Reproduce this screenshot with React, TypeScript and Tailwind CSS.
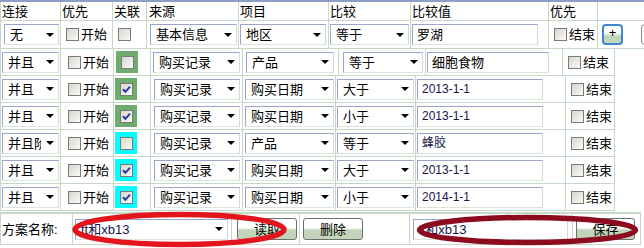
import React from "react";

const line = "border-[#c6d8c6]";

function Box({ checked }: { checked?: boolean }) {
  return (
    <span className="flex h-[13px] w-[13px] shrink-0 items-center justify-center border border-[#7a7a7a] bg-linear-to-br from-[#d6d6cc] to-[#fbfbf8]">
      {checked && (
        <svg width="11" height="11" viewBox="0 0 11 11">
          <path d="M2 5.2 L4.4 7.8 L9 2.6" fill="none" stroke="#2b3a9e" strokeWidth="2" />
        </svg>
      )}
    </span>
  );
}

function Sel({ text, className }: { text: string; className: string }) {
  return (
    <div className={`flex h-[21px] items-center border border-t-[#9aa4cc] border-l-[#9aa4cc] border-r-[#cfdccf] border-b-[#dbe6db] bg-white ${className}`}>
      <span className="min-w-0 flex-1 overflow-hidden whitespace-nowrap pl-[5px]">{text}</span>
      <span className="flex h-full w-[17px] shrink-0 items-center justify-center bg-white">
        <span className="h-0 w-0 border-x-[4px] border-t-[4px] border-x-transparent border-t-black" />
      </span>
    </div>
  );
}

function Field({ text, className }: { text: string; className: string }) {
  return (
    <div className={`flex h-[21px] items-center overflow-hidden whitespace-nowrap border border-t-[#9aa4cc] border-l-[#9aa4cc] border-r-[#cfdccf] border-b-[#dbe6db] bg-white pl-[4px] ${className}`}>
      {text}
    </div>
  );
}

function Btn({ text, className }: { text: string; className: string }) {
  return (
    <div className={`flex h-[22px] items-center justify-center rounded-[3px] border border-[#6e6e6e] bg-linear-to-b from-white from-45% to-[#c2d5ba] to-55% ${className}`}>
      {text}
    </div>
  );
}

function Check({ label }: { label: string }) {
  return (
    <div className="flex items-center gap-[2px]">
      <Box />
      <span>{label}</span>
    </div>
  );
}

const rows = [
  { link: "并且", color: "bg-[#6dac6d]", checked: true, item: "购买日期", cmp: "大于", val: "2013-1-1" },
  { link: "并且", color: "bg-[#6dac6d]", checked: true, item: "购买日期", cmp: "小于", val: "2013-1-1" },
  { link: "并且阶段", color: "bg-[#00ffff]", checked: false, item: "产品", cmp: "等于", val: "蜂胶" },
  { link: "并且", color: "bg-[#00ffff]", checked: true, item: "购买日期", cmp: "大于", val: "2013-1-1" },
  { link: "并且", color: "bg-[#00ffff]", checked: true, item: "购买日期", cmp: "小于", val: "2014-1-1" },
];

export default function App() {
  return (
    <div className="relative h-[248px] w-[644px] overflow-hidden bg-white font-['Liberation_Sans','Noto_Sans_CJK_SC',sans-serif] text-[13px] leading-none text-black">
      <div className="h-[2px] bg-[#8d9fc9]" />

      {/* header + first condition */}
      <div className={`flex h-[19px] border-b border-l ${line}`}>
        <div className={`flex w-[60px] shrink-0 items-center border-r ${line} pl-[1px]`}>连接</div>
        <div className={`flex w-[52px] shrink-0 items-center border-r ${line} pl-[1px]`}>优先</div>
        <div className={`flex w-[34px] shrink-0 items-center border-r ${line} pl-[1px]`}>关联</div>
        <div className={`flex w-[92px] shrink-0 items-center border-r ${line} pl-[2px]`}>来源</div>
        <div className={`flex w-[90px] shrink-0 items-center border-r ${line} pl-[1px]`}>项目</div>
        <div className={`flex w-[82px] shrink-0 items-center border-r ${line} pl-[1px]`}>比较</div>
        <div className={`flex w-[138px] shrink-0 items-center border-r ${line} pl-[1px]`}>比较值</div>
        <div className={`flex w-[49px] shrink-0 items-center border-r ${line} pl-[1px]`}>优先</div>
        <div className="min-w-0 flex-1" />
      </div>
      <div className={`flex h-[28px] border-b border-l ${line}`}>
        <div className={`flex w-[60px] shrink-0 items-center border-r ${line} pl-[3px]`}><Sel text="无" className="w-[55px]" /></div>
        <div className={`flex w-[52px] shrink-0 items-center border-r ${line} pl-[5px]`}><Check label="开始" /></div>
        <div className={`flex w-[34px] shrink-0 items-center border-r ${line} pl-[5px]`}><Box /></div>
        <div className={`flex w-[92px] shrink-0 items-center border-r ${line} pl-[3px]`}><Sel text="基本信息" className="w-[87px]" /></div>
        <div className={`flex w-[90px] shrink-0 items-center border-r ${line} pl-[1px]`}><Sel text="地区" className="w-[86px]" /></div>
        <div className={`flex w-[82px] shrink-0 items-center border-r ${line} pl-[1px]`}><Sel text="等于" className="w-[79px]" /></div>
        <div className={`flex w-[138px] shrink-0 items-center border-r ${line} pl-[1px]`}><Field text="罗湖" className="w-[126px]" /></div>
        <div className={`flex w-[49px] shrink-0 items-center border-r ${line} pl-[5px]`}><Check label="结束" /></div>
        <div className="flex min-w-0 flex-1 items-center gap-[18px] overflow-hidden pl-[4px]">
          <div className="flex h-[21px] w-[21px] shrink-0 items-center justify-center rounded-[4px] border-2 border-[#3f86d4] bg-linear-to-b from-white from-40% to-[#bfd8b6] to-60% pb-[4px] text-[13px]">+</div>
          <div className="h-[21px] w-[21px] shrink-0 rounded-[4px] border border-[#8a8a8a]" />
        </div>
      </div>

      {/* second condition */}
      <div className={`flex h-[27px] w-[615px] border-b border-l ${line}`}>
        <div className={`flex w-[60px] shrink-0 items-center border-r ${line} pl-[1px]`}><Sel text="并且" className="w-[57px]" /></div>
        <div className={`flex w-[53px] shrink-0 items-center border-r ${line} pl-[7px]`}><Check label="开始" /></div>
        <div className={`flex w-[37px] shrink-0 items-center border-r ${line} pl-[2px]`}>
          <span className="flex h-[22px] w-[22px] items-center justify-center bg-[#6dac6d]"><Box /></span>
        </div>
        <div className={`flex w-[92px] shrink-0 items-center border-r ${line} pl-[2px]`}><Sel text="购买记录" className="w-[87px]" /></div>
        <div className={`flex w-[96px] shrink-0 items-center border-r ${line} pl-[3px]`}><Sel text="产品" className="w-[88px]" /></div>
        <div className={`flex w-[87px] shrink-0 items-center border-r ${line} pl-[4px]`}><Sel text="等于" className="w-[80px]" /></div>
        <div className={`flex w-[137px] shrink-0 items-center border-r ${line} pl-[1px]`}><Field text="细胞食物" className="w-[122px]" /></div>
        <div className={`flex min-w-0 flex-1 items-center border-r ${line} pl-[5px]`}><Check label="结束" /></div>
      </div>

      {rows.map((r, i) => (
        <div key={i} className={`flex h-[27px] w-[615px] border-b border-l ${line}`}>
          <div className={`flex w-[60px] shrink-0 items-center border-r ${line} pl-[1px]`}><Sel text={r.link} className="w-[57px]" /></div>
          <div className={`flex w-[53px] shrink-0 items-center border-r ${line} pl-[7px]`}><Check label="开始" /></div>
          <div className={`flex w-[37px] shrink-0 items-center border-r ${line} pl-[1px]`}>
            <span className={`flex h-[22px] w-[22px] items-center justify-center ${r.color}`}><Box checked={r.checked} /></span>
          </div>
          <div className={`flex w-[92px] shrink-0 items-center border-r ${line} pl-[3px]`}><Sel text="购买记录" className="w-[86px]" /></div>
          <div className={`flex w-[93px] shrink-0 items-center border-r ${line} pl-[2px]`}><Sel text={r.item} className="w-[89px]" /></div>
          <div className={`flex w-[80px] shrink-0 items-center border-r ${line} pl-[1px]`}><Sel text={r.cmp} className="w-[77px]" /></div>
          <div className={`flex w-[150px] shrink-0 items-center border-r ${line} pl-[1px]`}><Field text={r.val} className="w-[126px] text-[12px] text-[#14144a]" /></div>
          <div className={`flex min-w-0 flex-1 items-center border-r ${line} pl-[5px]`}><Check label="结束" /></div>
        </div>
      ))}

      {/* scheme row */}
      <div className={`mt-[1px] flex h-[33px] w-[641px] border border-t-2 ${line}`}>
        <div className={`flex w-[72px] shrink-0 items-center border-r ${line} pl-[1px]`}>方案名称:</div>
        <div className={`flex w-[159px] shrink-0 items-center border-r ${line} pl-[2px]`}><Sel text="tt和xb13" className="w-[153px] text-[#14144a]" /></div>
        <div className={`flex w-[68px] shrink-0 items-center border-r ${line} pl-[5px]`}><Btn text="读取" className="w-[60px]" /></div>
        <div className={`flex w-[110px] shrink-0 items-center border-r ${line} pl-[3px]`}><Btn text="删除" className="w-[60px]" /></div>
        <div className={`flex w-[163px] shrink-0 items-center border-r ${line} pl-[3px]`}><Field text="tt和xb13" className="w-[155px] text-[#14144a]" /></div>
        <div className="flex min-w-0 flex-1 items-center pl-[3px]"><Btn text="保存" className="w-[59px]" /></div>
      </div>

      {/* hand-drawn marks over the scheme row */}
      <svg className="pointer-events-none absolute left-0 top-0" width="644" height="248" viewBox="0 0 644 248">
        <ellipse cx="179.5" cy="229.5" rx="104.5" ry="15" fill="none" stroke="#e3141c" strokeWidth="5.5" />
        <ellipse cx="527.5" cy="230" rx="108" ry="12.5" fill="none" stroke="#8c0c1e" strokeWidth="5.5" />
      </svg>
    </div>
  );
}
